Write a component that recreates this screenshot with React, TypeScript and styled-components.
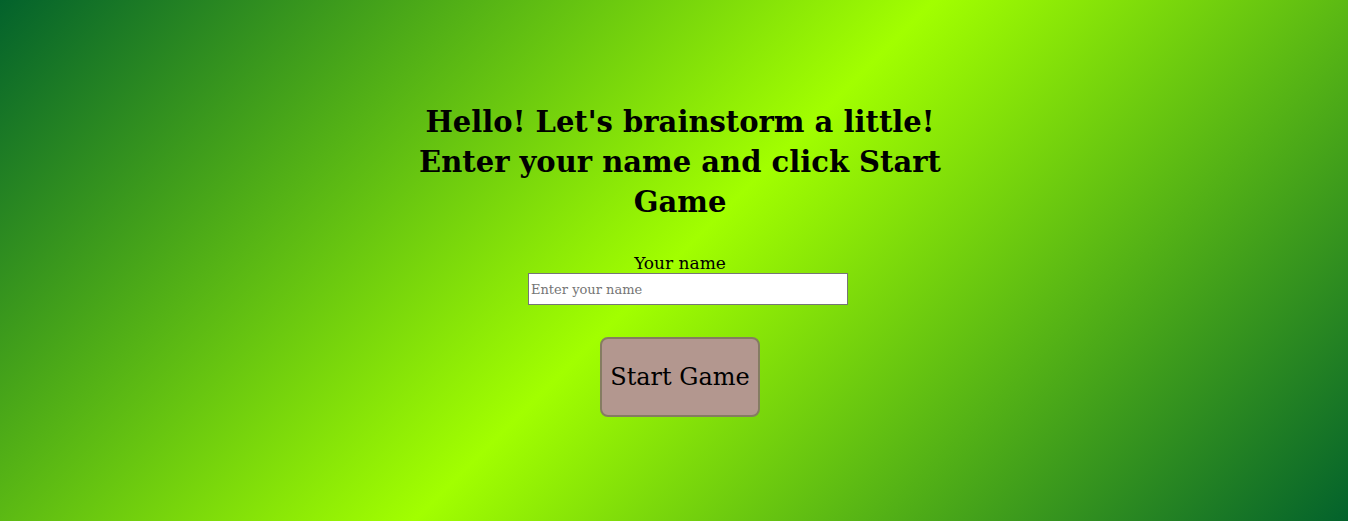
import React from "react";
import styled, { createGlobalStyle } from "styled-components";

const Global = createGlobalStyle`
  html, body { margin: 0; padding: 0; height: 100%; }
  body {
    font-family: "DejaVu Serif", "Liberation Serif", serif;
    background: linear-gradient(135deg, #03622c 0%, #a2ff00 50%, #03622c 100%);
    min-height: 521px;
  }
`;

const Page = styled.main`
  display: flex;
  flex-direction: column;
  align-items: center;
  padding: 102px 0 0 12px;
  box-sizing: border-box;
  min-height: 521px;
`;

const Title = styled.h1`
  margin: 0;
  width: 540px;
  text-align: center;
  font-size: 29px;
  line-height: 40px;
  font-weight: bold;
  color: #000;
`;

const Form = styled.form`
  display: flex;
  flex-direction: column;
  align-items: center;
  margin-top: 31px;
`;

const Label = styled.label`
  font-size: 17px;
  line-height: 20px;
  color: #000;
`;

const Input = styled.input`
  width: 320px;
  height: 32px;
  box-sizing: border-box;
  margin-left: 16px;
  border: 1px solid #767676;
  padding: 0 2px;
  font-family: "DejaVu Serif", serif;
  font-size: 13px;
  background: #fff;
  &::placeholder { color: #757575; }
`;

const Button = styled.button`
  margin-top: 32px;
  width: 160px;
  height: 80px;
  box-sizing: border-box;
  border: 2px solid #857c62;
  border-radius: 8px;
  background: #b3978f;
  font-family: "DejaVu Serif", serif;
  font-size: 24px;
  color: #000;
  padding: 0;
`;

export default function App() {
  return (
    <>
      <Global />
      <Page>
        <Title>
          Hello! Let's brainstorm a little!
          <br />
          Enter your name and click Start Game
        </Title>
        <Form onSubmit={(e) => e.preventDefault()}>
          <Label htmlFor="name">Your name</Label>
          <Input id="name" type="text" placeholder="Enter your name" />
          <Button type="submit">Start Game</Button>
        </Form>
      </Page>
    </>
  );
}
